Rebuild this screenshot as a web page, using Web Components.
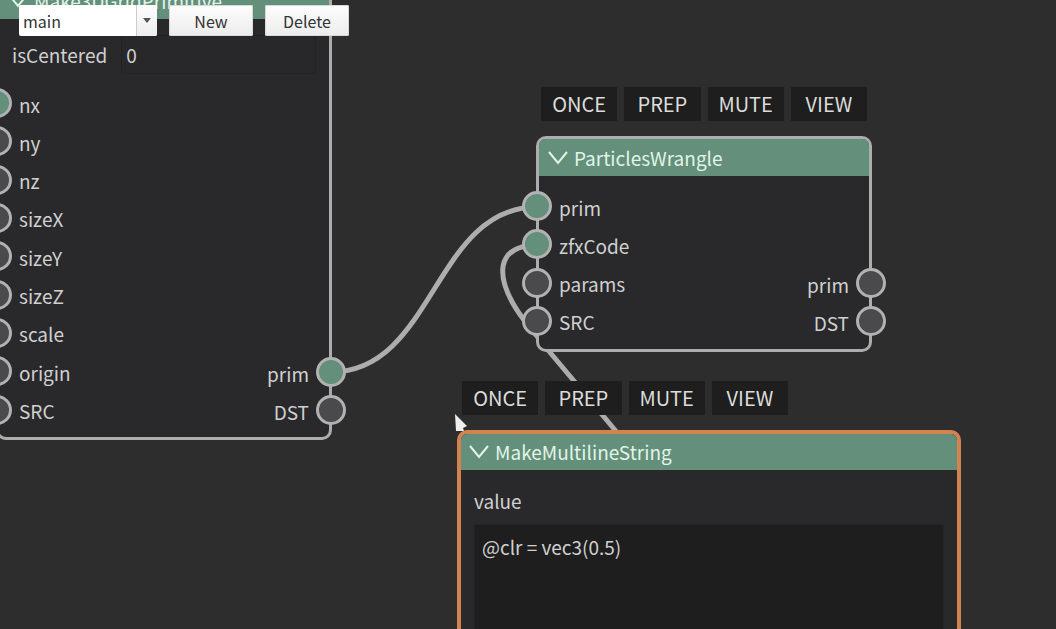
<!DOCTYPE html>
<html lang="en">
<head>
<meta charset="utf-8">
<title>Node editor</title>
<style>
  html, body { margin: 0; height: 100%; }
  body { overflow: hidden; background: #2d2d2d; color: #d0d0d0; font: 19px/30px "Noto Sans CJK SC", "Noto Sans", sans-serif; }
</style>
</head>
<body>
<node-canvas>
  <graph-toolbar slot="toolbar"></graph-toolbar>
  <graph-node name="Make3DGridPrimitive" style="left:-4px;top:-21px;--ports:345px">
    <param-field slot="params" label="isCentered" value="0"></param-field>
    <node-port slot="in" linked>nx</node-port>
    <node-port slot="in">ny</node-port>
    <node-port slot="in">nz</node-port>
    <node-port slot="in">sizeX</node-port>
    <node-port slot="in">sizeY</node-port>
    <node-port slot="in">sizeZ</node-port>
    <node-port slot="in">scale</node-port>
    <node-port slot="in">origin</node-port>
    <node-port slot="in">SRC</node-port>
    <node-port slot="out" side="right" linked>prim</node-port>
    <node-port slot="out" side="right">DST</node-port>
  </graph-node>
  <graph-node name="ParticlesWrangle" options style="left:536px;top:136px;--ports:153px">
    <node-port slot="in" linked>prim</node-port>
    <node-port slot="in" linked>zfxCode</node-port>
    <node-port slot="in">params</node-port>
    <node-port slot="in">SRC</node-port>
    <node-port slot="out" side="right">prim</node-port>
    <node-port slot="out" side="right">DST</node-port>
  </graph-node>
  <graph-node name="MakeMultilineString" options selected style="left:457px;top:430px;--width:504px">
    <param-field slot="params" label="value" value="@clr = vec3(0.5)" multiline></param-field>
  </graph-node>
</node-canvas>

<script>
class Base extends HTMLElement {
  connectedCallback() {
    if (this.shadowRoot) return;
    this.attachShadow({ mode: 'open' }).innerHTML = '<style>*{box-sizing:border-box}</style>' + this.render();
  }
}

customElements.define('node-canvas', class extends Base {
  render() {
    return `<style>
      :host { display: block; position: relative; height: 100vh; overflow: hidden; }
      svg { position: absolute; inset: 0; width: 100%; height: 100%; pointer-events: none; }
      .wires { fill: none; stroke: #adadad; stroke-width: 5; }
      header { position: absolute; top: 5px; left: 19px; z-index: 3; }
    </style>
    <svg class="wires" aria-hidden="true">
      <path d="M331 372C434 372 434 207 537 207"/>
      <path d="M537 245C490 246 497 284 524 320L548 350L574 381L630 448"/>
    </svg>
    <slot></slot>
    <header><slot name="toolbar"></slot></header>
    <svg aria-hidden="true"><path d="M455 414L467 426L463 428L464 431L456 431Z" fill="#eee"/></svg>`;
  }
});

customElements.define('graph-toolbar', class extends Base {
  render() {
    return `<style>
      :host { display: flex; gap: 12px; }
      select, button { height: 31px; margin: 0; border: 0; border-radius: 2px; color: #333; font: 16px/30px "Noto Sans CJK SC", "Noto Sans", sans-serif; }
      button { width: 84px; padding: 0; background: linear-gradient(#fdfdfd, #ececec); box-shadow: 0 0 0 1px #d8d8d8 inset; }
      .combo { display: grid; grid-template-columns: 117px 21px; }
      select { grid-area: 1 / 1 / 2 / 3; appearance: none; padding: 0 24px 0 4px; background: #fff; }
      .arrow { grid-area: 1 / 2; display: grid; place-items: center; border-left: 1px solid #ccc; border-radius: 0 2px 2px 0; background: linear-gradient(#fdfdfd, #eee); pointer-events: none; }
    </style>
    <div class="combo">
      <select aria-label="Graph"><option>main</option></select>
      <span class="arrow"><svg width="8" height="5"><path d="M0 0H8L4 5Z" fill="#555"/></svg></span>
    </div>
    <button type="button">New</button>
    <button type="button">Delete</button>`;
  }
});

customElements.define('graph-node', class extends Base {
  render() {
    const options = this.hasAttribute('options')
      ? '<div class="options">' + ['ONCE', 'PREP', 'MUTE', 'VIEW'].map(t => `<button type="button">${t}</button>`).join('') + '</div>' : '';
    const params = this.querySelector('param-field')
      ? '<div class="params"><slot name="params"></slot></div>' : '';
    const ports = this.querySelector('node-port')
      ? '<div class="ports"><div class="in"><slot name="in"></slot></div><div class="out"><slot name="out"></slot></div></div>' : '';
    return `<style>
      :host { display: block; position: absolute; width: var(--width, 336px); }
      article { border: 3px solid #adadad; border-radius: 10px; background: #29292b; }
      :host([selected]) article { border: 4px solid #d38350; min-height: 260px; }
      header { display: flex; align-items: center; gap: 6px; height: 37px; padding-left: 9px; border-radius: 6px 6px 0 0; background: #648f7a; color: #e0f5e8; }
      h2 { margin: 0; font: inherit; }
      header button { display: flex; width: 20px; padding: 0; border: 0; background: none; color: inherit; }
      :host([selected]) header { height: 36px; padding-left: 8px; }
      .params { padding: 16px 13px 10px; }
      .ports { display: flex; justify-content: space-between; margin: 11px 0 9px; height: var(--ports); }
      .params + .ports { margin: 0 0 8px; }
      .in { display: grid; grid-auto-rows: 1fr; }
      .out { display: flex; flex-direction: column; justify-content: flex-end; }
      .options { position: absolute; bottom: 100%; left: 5px; display: grid; grid-template-columns: repeat(4, 1fr); gap: 7px; width: 326px; margin-bottom: 15px; }
      .options button { height: 34px; padding: 0; border: 0; background: #1e1e1e; color: #dcdcdc; font: inherit; font-size: 20px; }
    </style>
    ${options}
    <article>
      <header>
        <button type="button" aria-label="Collapse"><svg width="20" height="14"><path d="M1 1L10 12L19 1" fill="none" stroke="currentColor" stroke-width="2"/></svg></button>
        <h2>${this.getAttribute('name')}</h2>
      </header>
      ${params}
      ${ports}
    </article>`;
  }
});

customElements.define('node-port', class extends Base {
  render() {
    return `<style>
      :host { display: flex; align-items: center; gap: 7px; height: 38px; margin-left: -17px; }
      :host([side="right"]) { flex-direction: row-reverse; margin: 0 -17px 0 0; }
      i { width: 30px; height: 30px; border: 3px solid #b2b2b2; border-radius: 50%; background: #4a4a4c; }
      :host([linked]) i { background: #648f7a; }
      span { padding-top: 3px; }
    </style><i></i><span><slot></slot></span>`;
  }
});

customElements.define('param-field', class extends Base {
  render() {
    const multi = this.hasAttribute('multiline'), value = this.getAttribute('value');
    const control = multi
      ? `<textarea id="f" spellcheck="false">${value}</textarea>`
      : `<input id="f" type="text" value="${value}">`;
    return `<style>
      :host { display: flex; align-items: center; gap: 14px; }
      :host([multiline]) { flex-direction: column; align-items: stretch; gap: 8px; }
      input, textarea { margin: 0; border: 1px solid #232324; outline: 0; color: inherit; font: inherit; resize: none; }
      input { flex: 1; min-width: 0; height: 39px; padding: 0 4px; border-radius: 3px; background: #28282a; }
      textarea { height: 180px; padding: 7px; background: #1e1e1e; overflow: hidden; }
    </style><label for="f">${this.getAttribute('label')}</label>${control}`;
  }
});
</script>
</body>
</html>
